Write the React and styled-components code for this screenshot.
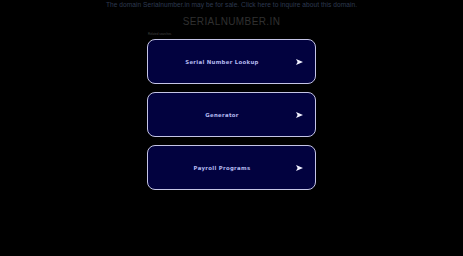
import React from "react";
import styled, { createGlobalStyle } from "styled-components";

const GlobalStyle = createGlobalStyle`
  body {
    margin: 0;
    background-color: #000;
    font-family: "Liberation Sans", Arial, sans-serif;
  }
`;

const Page = styled.div`
  width: 100%;
  display: flex;
  flex-direction: column;
  align-items: center;
`;

const SaleBar = styled.a`
  display: block;
  margin-top: 1px;
  font-size: 6.6px;
  line-height: 7px;
  color: #2e3a50;
  text-decoration: none;
  letter-spacing: 0.05px;
`;

const Title = styled.h1`
  margin: 8px 0 0 0;
  font-size: 10px;
  line-height: 11px;
  font-weight: normal;
  color: #303030;
  letter-spacing: 0.4px;
`;

const Column = styled.div`
  width: 169px;
  display: flex;
  flex-direction: column;
`;

const Related = styled.div`
  margin: 5px 0 3px 1px;
  font-size: 3px;
  line-height: 4px;
  color: #444;
`;

const CardList = styled.div`
  display: flex;
  flex-direction: column;
  gap: 8px;
`;

const Card = styled.a`
  box-sizing: border-box;
  height: 45px;
  display: flex;
  align-items: center;
  padding: 0 12px 0 0;
  border: 1.5px solid #c4c4e6;
  border-radius: 8px;
  background-color: #02023f;
  text-decoration: none;
  cursor: pointer;
`;

const CardText = styled.span`
  flex: 1;
  text-align: center;
  font-family: "DejaVu Sans", Verdana, sans-serif;
  font-weight: bold;
  font-size: 5.4px;
  letter-spacing: 0.3px;
  color: #b3b9ef;
`;

const Arrow = styled.svg`
  width: 7px;
  height: 6px;
`;

const links = ["Serial Number Lookup", "Generator", "Payroll Programs"];

const App = () => {
  return (
    <>
      <GlobalStyle />
      <Page>
        <SaleBar href="#">
          The domain Serialnumber.in may be for sale. Click here to inquire about this domain.
        </SaleBar>
        <Title>SERIALNUMBER.IN</Title>
        <Column>
          <Related>Related searches</Related>
          <CardList>
            {links.map(label => (
              <Card key={label} href="#">
                <CardText>{label}</CardText>
                <Arrow viewBox="0 0 7 6">
                  <path d="M0 0 L7 3 L0 6 L1.6 3 Z" fill="#f2f2ff" />
                </Arrow>
              </Card>
            ))}
          </CardList>
        </Column>
      </Page>
    </>
  );
};

export default App;
